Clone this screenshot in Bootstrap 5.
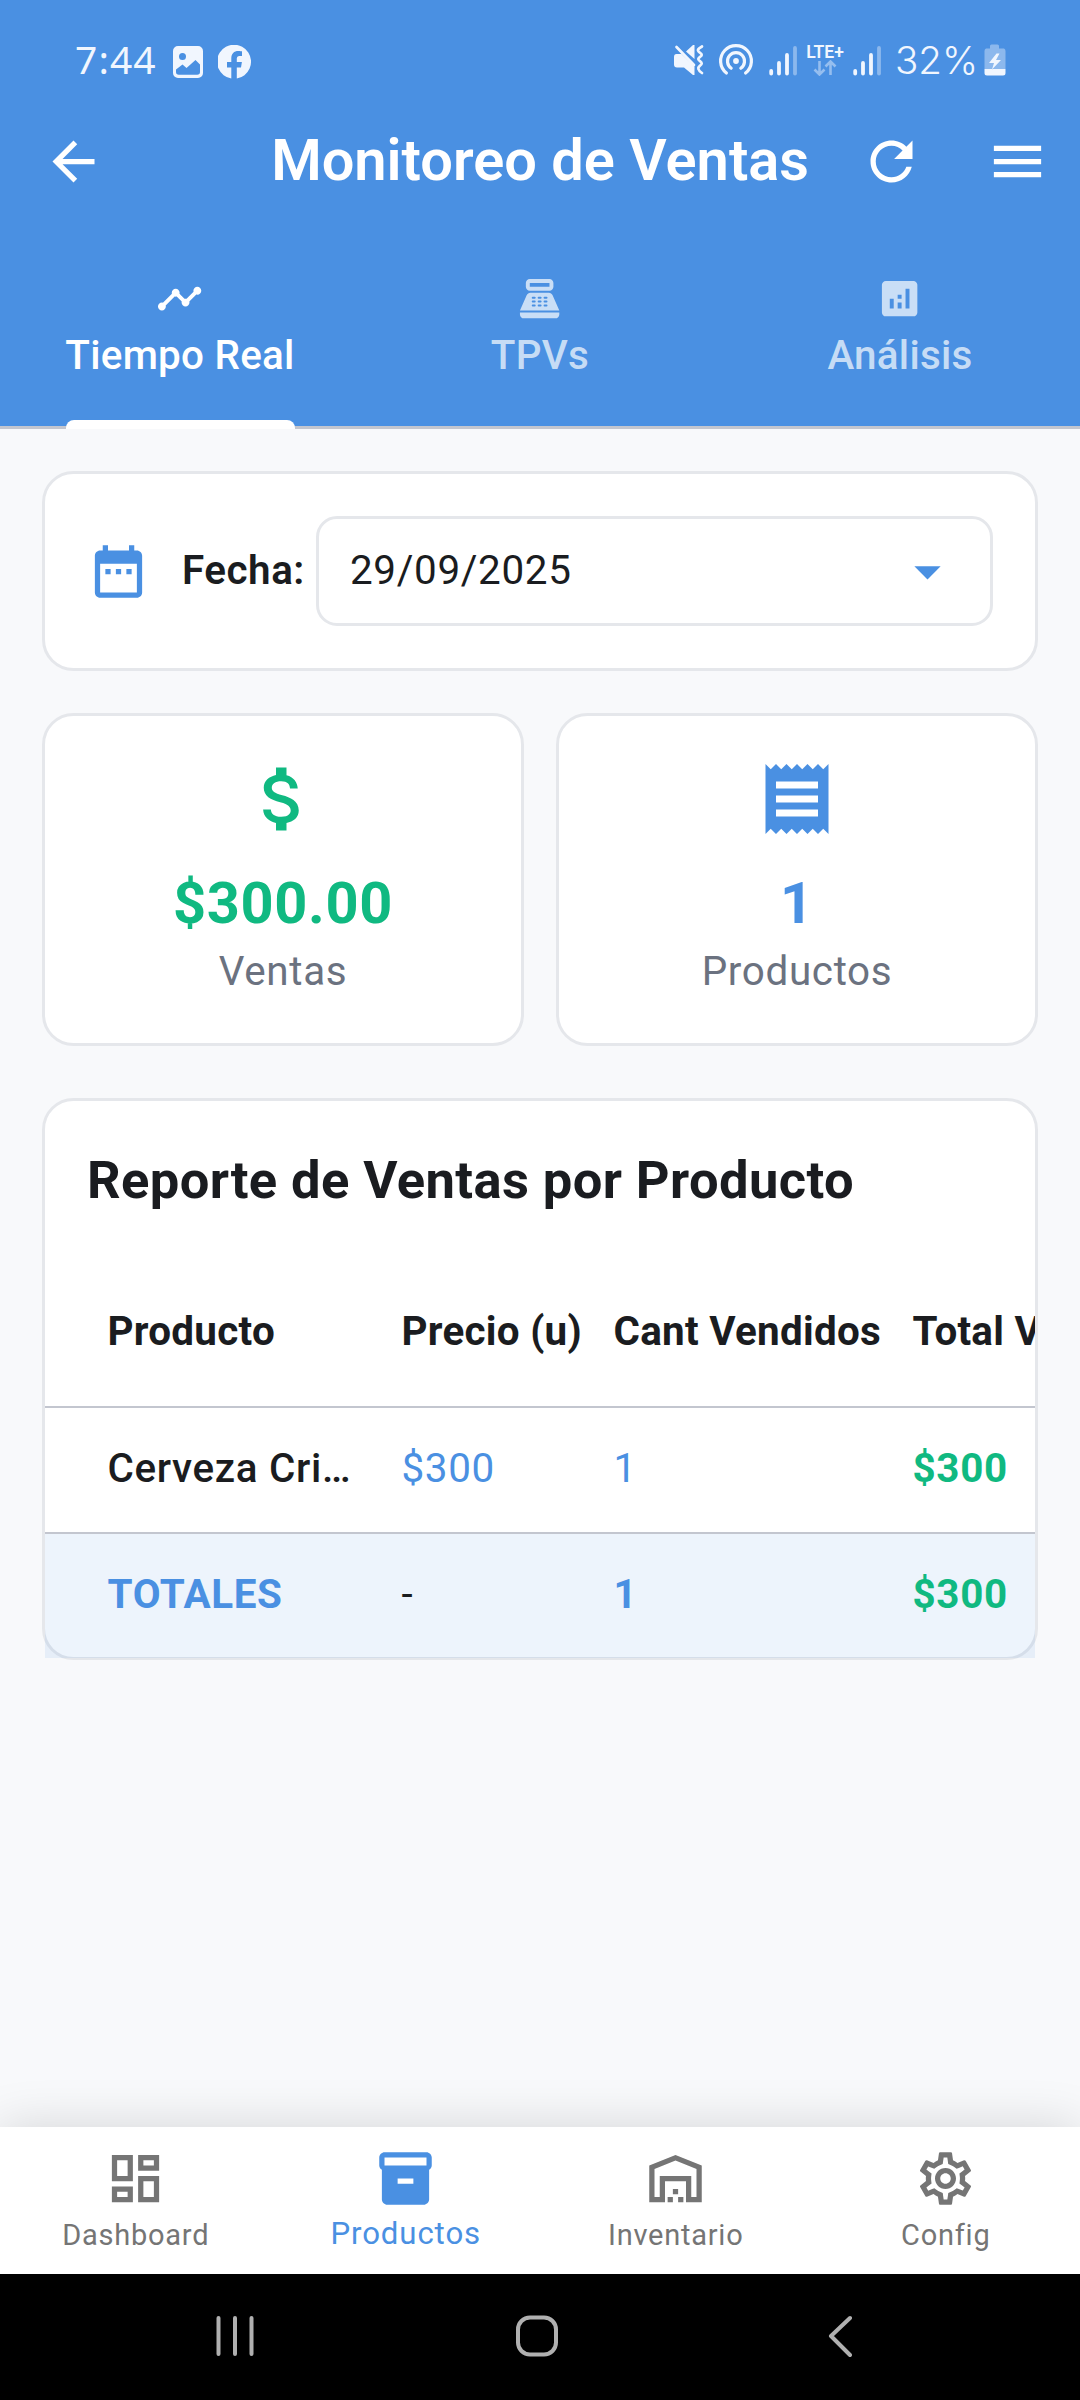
<!DOCTYPE html>
<html lang="es">
<head>
<meta charset="utf-8">
<meta name="viewport" content="width=device-width, initial-scale=1">
<title>Monitoreo de Ventas</title>
<link href="https://cdn.jsdelivr.net/npm/bootstrap@5.3.0/dist/css/bootstrap.min.css" rel="stylesheet">
<style>
:root{--azul:#4a90e2;--verde:#10b981;--borde:#e5e7eb;--tinta:#1a1c20;--gris:#6b7280;--linea:#c3c6cf}
body{width:1080px;height:2400px;overflow:hidden;background:#f8f9fb;color:var(--tinta);font-family:Roboto,"Noto Sans",sans-serif;font-size:40.4px;line-height:48px;letter-spacing:.66px}
svg{display:block;flex:none}
.ic{fill:currentColor;width:63px;height:63px}
.top-area{background:var(--azul)}
.status-row{height:120px;padding:0 74px 0 75px;color:#f1f6fe}
.clock{font-family:"Noto Sans",sans-serif;font-size:39px;letter-spacing:1.1px;width:97px;margin-top:-2px}
.pct{font-family:Inter,sans-serif;font-size:38.500px;font-weight:300;letter-spacing:0;width:89px;margin-left:14px}
.photo-ic{margin-top:3px}
.fb-ic{margin:3px auto 0 14px}
.cast-ic{margin:0 15px 0 14px}
.lte{font-size:17.5px;line-height:16px;font-weight:600;letter-spacing:0;width:38px;margin:0 9px}
.app-row{height:83px;padding:0 31px 0 42px}
.app-title{font-size:57.75px;font-weight:600;line-height:70px;letter-spacing:0;margin-top:-3px}
.reload{margin:0 63px 0 51px}
.tab-strip{height:226px;border-bottom:3px solid var(--linea)}
.tab-cell{color:rgba(255,255,255,.7);font-weight:500;letter-spacing:.26px;padding-top:72px}
.tab-cell .ic{width:47.25px;height:47.25px;margin-bottom:9.5px}
.tab-cell.on{color:#fff}
.ink-bar{width:229px;height:9px;border-radius:8px 8px 0 0;background:#fff;margin-top:auto;margin-bottom:-3px}
.page{padding:42px 42px 0}
.panel{background:#fff;border:3px solid var(--borde);border-radius:31.5px}
.date-panel{height:200px;padding:0 42px;margin-bottom:42px}
.date-name{width:134px;margin-left:32px;font-weight:600;letter-spacing:.5px}
.date-box{height:110px;border:3px solid var(--borde);border-radius:21px;padding:0 31px}
.stat-row{gap:32px}
.stat{height:333px;padding-top:41px}
.stat .ic{width:84px;height:84px}
.stat-num{font-size:57.75px;line-height:68px;font-weight:700;margin:28px 0 11px}
.stat-cap{color:var(--gris)}
.report{height:562px;margin-top:52px}
.report-title{font-size:52.5px;line-height:62px;font-weight:700;letter-spacing:.4px;padding:48px 42px 0 42px;margin:0}
.grid-wrap{overflow:hidden;margin-top:45px}
.sales{table-layout:fixed;width:1280px;border-collapse:separate;border-spacing:0}
.sales td,.sales th{padding:0;white-space:nowrap;vertical-align:middle}
.sales thead th{height:152px;font-weight:700;letter-spacing:.26px;padding-top:2px;border-bottom:2px solid var(--linea)}
.sales tbody td{height:126px;padding-bottom:2px;border-bottom:2px solid var(--linea)}
.sales tfoot td{height:124px;padding-bottom:2px;background:rgba(74,144,226,.1);font-weight:700}
.sales tr>:first-child{padding-left:62.5px}
.sales .c-1{width:356.5px}.sales .c-2{width:212px}.sales .c-3{width:299px}
.azul{color:var(--azul)}.verde{color:var(--verde)}
.semi{font-weight:500}
.bottom-nav{height:147px;background:#fff;box-shadow:0 0 50px rgba(0,0,0,.15)}
.nav-cell{color:#757575;font-size:29px;line-height:36px;letter-spacing:.75px;padding-top:20px}
.nav-cell .ic{margin-bottom:7px}
.nav-cell span{padding-left:1.500px}
.nav-cell.on{color:var(--azul);font-size:31.2px;letter-spacing:.9px}
.nav-cell.on .ic{margin-bottom:6px}
.sys-bar{height:126px;background:#000}
</style>
<script src="https://cdn.jsdelivr.net/npm/bootstrap@5.3.0/dist/js/bootstrap.bundle.min.js"></script>
</head>
<body class="d-flex flex-column">
<header class="top-area">
  <div class="status-row d-flex align-items-center">
    <span class="clock">7:44</span>
    <svg class="photo-ic" width="32" height="32" viewBox="0 0 32 32"><path fill="#f1f6fe" fill-rule="evenodd" d="M6 0h20a5 5 0 0 1 5 5v22a5 5 0 0 1-5 5H6a5 5 0 0 1-5-5V5a5 5 0 0 1 5-5zM10.500 7a3.500 3.500 0 1 0 0 7 3.500 3.500 0 0 0 0-7zM4 23.500V26c0 1.800 1 2.800 2.800 2.800h18.400c1.800 0 2.800-1 2.800-2.800v-7.500l-4.500-4.500-9 8-4-3.500z"/></svg>
    <svg class="fb-ic" width="34" height="34" viewBox="0 0 34 34"><path fill="#f1f6fe" d="M13.300 33.500V22.500H9V17h4.300v-3.600c0-4.900 2.700-7.500 7-7.500 1.700 0 3.700.3 3.700.3v4.700h-2.400c-2 0-2.800 1.300-2.800 2.700V17h5.100l-.9 5.500h-4.200v11A17 17 0 1 0 13.300 33.500z"/></svg>
    <svg width="32" height="32" viewBox="0 0 32 32" fill="none" stroke="#f1f6fe" stroke-width="2.700" stroke-linecap="round" stroke-linejoin="round"><path fill="#f1f6fe" stroke="none" d="M4.500 10h5L22.500 22.500V31h-1.500L12 23.500H5c-2 0-3-1-3-3V13c0-2 .8-3 2.500-3zM14 7.500l7-6.500h1.500v14z"/><path d="M4.500 3l17.500 18"/><path d="M30 2.500c-5 3-5 4-2 6.300 2.300 1.700 2.300 2.500 0 4-2.300 1.700-2.300 2.700 0 4.400 2.300 1.700 2.300 2.700 0 4.400-2.700 2.200-2.300 4.500 2 7.400"/></svg>
    <svg class="cast-ic" width="36" height="34" viewBox="-18 -18 36 34" fill="none" stroke="#f1f6fe" stroke-width="3.200" stroke-linecap="round"><circle r="2.900" fill="#f1f6fe" stroke="none"/><path d="M-4.800 7.200A8.500 8.500 0 1 1 4.800 7.200M-9.600 12A15.400 15.400 0 1 1 9.600 12"/></svg>
    <svg width="28" height="31" viewBox="0 0 28 31" fill="none" stroke="#f1f6fe" stroke-width="3.800" stroke-linecap="round"><path d="M2.200 26v2.500M10 18v10.500M18 10v18.500"/><path d="M26 3v25.500" stroke-opacity=".4"/></svg>
    <div class="lte d-flex flex-column align-items-center"><span>LTE+</span><svg width="24" height="16" viewBox="0 0 24 16" fill="none" stroke="#f1f6fe" stroke-opacity=".45" stroke-width="2.600"><path d="M6.500 1v13M1.500 9.500l5 5 5-5M17.500 15V2M12.500 6.500l5-5 5 5"/></svg></div>
    <svg width="28" height="31" viewBox="0 0 28 31" fill="none" stroke="#f1f6fe" stroke-width="3.800" stroke-linecap="round"><path d="M2.200 26v2.500M10 18v10.500M18 10v18.500"/><path d="M26 3v25.500" stroke-opacity=".4"/></svg>
    <span class="pct">32%</span>
    <svg width="22" height="32" viewBox="0 0 22 32"><path fill="#f1f6fe" fill-opacity=".4" d="M6 4.500V2Q6 .5 7.500 .5h6Q15 .5 15 2v2.500h5Q21.500 5 21.500 7v18H.500V7Q.500 5 2 4.500z"/><path fill="#f1f6fe" d="M.500 25h21v4q0 2.500-2.500 2.500H3Q.500 31.500.500 29zM12.500 9.500l-7.500 9.500h5l-2 6.500 9-9.500h-5l3.500-6.500z"/></svg>
  </div>
  <div class="app-row d-flex align-items-center">
    <svg class="ic text-white" viewBox="0 0 24 24"><path d="M20 11H7.830l5.590-5.590L12 4l-8 8 8 8 1.410-1.410L7.830 13H20v-2z"/></svg>
    <span class="app-title text-white ms-auto">Monitoreo de Ventas</span>
    <svg class="ic reload text-white" viewBox="0 0 24 24"><path d="M17.650 6.350C16.200 4.900 14.210 4 12 4c-4.420 0-7.990 3.580-7.990 8s3.570 8 7.990 8c3.730 0 6.840-2.550 7.730-6h-2.080c-.82 2.330-3.040 4-5.650 4-3.310 0-6-2.690-6-6s2.690-6 6-6c1.660 0 3.140.69 4.220 1.780L13 11h7V4l-2.350 2.350z"/></svg>
    <svg class="ic text-white" viewBox="0 0 24 24"><path d="M3 18h18v-2H3v2zm0-5h18v-2H3v2zm0-7v2h18V6H3z"/></svg>
  </div>
  <nav class="tab-strip d-flex">
    <div class="tab-cell on col-4 d-flex flex-column align-items-center">
      <svg class="ic" viewBox="0 0 24 24"><path d="M23 8c0 1.100-.9 2-2 2-.18 0-.35-.02-.51-.07l-3.560 3.550c.05.16.07.34.07.52 0 1.100-.9 2-2 2s-2-.9-2-2c0-.18.02-.36.07-.52l-2.550-2.550c-.16.05-.34.07-.52.07s-.36-.02-.52-.07l-4.550 4.560c.05.16.07.33.07.51 0 1.100-.9 2-2 2s-2-.9-2-2 .9-2 2-2c.18 0 .35.02.51.07l4.560-4.550C8.020 9.360 8 9.180 8 9c0-1.100.9-2 2-2s2 .9 2 2c0 .18-.02.36-.07.52l2.550 2.550c.16-.05.34-.07.52-.07s.36.02.52.07l3.550-3.560C19.020 8.350 19 8.180 19 8c0-1.100.9-2 2-2s2 .9 2 2z"/></svg>
      <span>Tiempo Real</span>
      <div class="ink-bar"></div>
    </div>
    <div class="tab-cell col-4 d-flex flex-column align-items-center">
      <svg class="ic" viewBox="0 0 24 24"><path fill-rule="evenodd" d="M17 2H7c-1.100 0-2 .9-2 2v2c0 1.100.9 2 2 2h10c1.100 0 2-.9 2-2V4c0-1.100-.9-2-2-2zm0 4H7V4h10v2zm3 16H4c-1.100 0-2-.9-2-2v-1h20v1c0 1.100-.9 2-2 2zm-1.470-11.810C18.210 9.470 17.490 9 16.700 9H7.300c-.79 0-1.510.47-1.830 1.190L2 18h20l-3.470-7.810zM8.500 11h1a.5.5 0 0 1 0 1h-1a.5.5 0 0 1 0-1zm3 0h1a.5.5 0 0 1 0 1h-1a.5.5 0 0 1 0-1zm3 0h1a.5.5 0 0 1 0 1h-1a.5.5 0 0 1 0-1zm-6 2h1a.5.5 0 0 1 0 1h-1a.5.5 0 0 1 0-1zm3 0h1a.5.5 0 0 1 0 1h-1a.5.5 0 0 1 0-1zm3 0h1a.5.5 0 0 1 0 1h-1a.5.5 0 0 1 0-1zm-6 2h1a.5.5 0 0 1 0 1h-1a.5.5 0 0 1 0-1zm3 0h1a.5.5 0 0 1 0 1h-1a.5.5 0 0 1 0-1zm3 0h1a.5.5 0 0 1 0 1h-1a.5.5 0 0 1 0-1z"/></svg>
      <span>TPVs</span>
    </div>
    <div class="tab-cell col-4 d-flex flex-column align-items-center">
      <svg class="ic" viewBox="0 0 24 24"><path d="M19 3H5c-1.100 0-2 .9-2 2v14c0 1.100.9 2 2 2h14c1.100 0 2-.9 2-2V5c0-1.100-.9-2-2-2zM9 17H7v-5h2v5zm4 0h-2v-3h2v3zm0-5h-2v-2h2v2zm4 5h-2V7h2v10z"/></svg>
      <span>Análisis</span>
    </div>
  </nav>
</header>

<main class="page flex-grow-1">
  <section class="panel date-panel d-flex align-items-center">
    <svg class="ic azul" viewBox="0 0 24 24"><path fill-rule="evenodd" d="M6 2h2v2h8V2h2v2h1c1.100 0 2 .9 2 2v14c0 1.100-.9 2-2 2H5c-1.100 0-2-.9-2-2V6c0-1.100.9-2 2-2h1zM5 9v11h14V9zM7 11h2v2H7zm4 0h2v2h-2zm4 0h2v2h-2z"/></svg>
    <span class="date-name">Fecha:</span>
    <div class="date-box flex-grow-1 d-flex align-items-center justify-content-between">
      <span>29/09/2025</span>
      <svg class="ic azul" viewBox="0 0 24 24"><path d="M7 10l5 5 5-5z"/></svg>
    </div>
  </section>

  <section class="stat-row d-flex">
    <div class="panel stat flex-fill w-50 d-flex flex-column align-items-center">
      <svg class="ic verde" viewBox="0 0 24 24"><path d="M11.800 10.900c-2.270-.59-3-1.200-3-2.150 0-1.090 1.010-1.850 2.700-1.850 1.780 0 2.440.85 2.500 2.100h2.210c-.07-1.720-1.120-3.300-3.210-3.810V3h-3v2.160c-1.940.42-3.500 1.680-3.500 3.610 0 2.310 1.910 3.460 4.700 4.130 2.500.6 3 1.480 3 2.410 0 .69-.49 1.790-2.700 1.790-2.060 0-2.870-.92-2.980-2.100h-2.200c.12 2.190 1.760 3.420 3.680 3.830V21h3v-2.150c1.950-.37 3.500-1.500 3.500-3.550 0-2.840-2.430-3.810-4.700-4.400z"/></svg>
      <div class="stat-num verde">$300.00</div>
      <div class="stat-cap">Ventas</div>
    </div>
    <div class="panel stat flex-fill w-50 d-flex flex-column align-items-center">
      <svg class="ic azul" viewBox="0 0 24 24"><path d="M18 17H6v-2h12v2zm0-4H6v-2h12v2zm0-4H6V7h12v2zM3 22l1.500-1.500L6 22l1.500-1.500L9 22l1.500-1.500L12 22l1.500-1.500L15 22l1.500-1.500L18 22l1.500-1.500L21 22V2l-1.500 1.500L18 2l-1.500 1.500L15 2l-1.500 1.500L12 2l-1.500 1.500L9 2 7.500 3.500 6 2 4.500 3.500 3 2v20z"/></svg>
      <div class="stat-num azul">1</div>
      <div class="stat-cap">Productos</div>
    </div>
  </section>

  <section class="panel report">
    <h2 class="report-title">Reporte de Ventas por Producto</h2>
    <div class="grid-wrap">
      <table class="sales">
        <thead><tr><th class="c-1">Producto</th><th class="c-2">Precio (u)</th><th class="c-3">Cant Vendidos</th><th>Total V</th></tr></thead>
        <tbody><tr><td class="semi">Cerveza Cri…</td><td class="azul">$300</td><td class="azul">1</td><td class="verde fw-bold">$300</td></tr></tbody>
        <tfoot><tr><td class="azul">TOTALES</td><td class="fw-normal">-</td><td class="azul">1</td><td class="verde">$300</td></tr></tfoot>
      </table>
    </div>
  </section>
</main>

<nav class="bottom-nav d-flex position-relative">
  <div class="nav-cell col-3 d-flex flex-column align-items-center">
    <svg class="ic" viewBox="0 0 24 24"><path d="M19 5v2h-4V5h4M9 5v6H5V5h4m10 8v6h-4v-6h4M9 17v2H5v-2h4M21 3h-8v6h8V3zM11 3H3v10h8V3zm10 8h-8v10h8V11zm-10 4H3v6h8v-6z"/></svg>
    <span>Dashboard</span>
  </div>
  <div class="nav-cell on col-3 d-flex flex-column align-items-center">
    <svg class="ic" viewBox="0 0 24 24"><path d="M20 2H4c-1 0-2 .9-2 2v3.010c0 .72.43 1.340 1 1.690V20c0 1.100 1.100 2 2 2h14c.9 0 2-.9 2-2V8.700c.57-.35 1-.97 1-1.690V4c0-1.100-1-2-2-2zm-5 12H9v-2h6v2zm5-7H4V4l16-.02V7z"/></svg>
    <span>Productos</span>
  </div>
  <div class="nav-cell col-3 d-flex flex-column align-items-center">
    <svg class="ic" viewBox="0 0 24 24"><path d="M20 8.350V19h-2v-8H6v8H4V8.350l8-3.200 8 3.200zM22 21V7L12 3 2 7v14h6v-8h8v8h6zM11 19H9v2h2v-2zM13 16h-2v2h2v-2zM15 19h-2v2h2v-2z"/></svg>
    <span>Inventario</span>
  </div>
  <div class="nav-cell col-3 d-flex flex-column align-items-center">
    <svg class="ic" viewBox="0 0 24 24"><path d="M19.430 12.980c.04-.32.07-.64.07-.98 0-.34-.03-.66-.07-.98l2.110-1.650c.19-.15.24-.42.12-.64l-2-3.460c-.09-.16-.26-.25-.44-.25-.06 0-.12.01-.17.03l-2.490 1c-.52-.4-1.080-.73-1.690-.98l-.38-2.650C14.460 2.180 14.250 2 14 2h-4c-.25 0-.46.18-.49.42l-.38 2.650c-.61.25-1.170.59-1.690.98l-2.490-1c-.06-.02-.12-.03-.18-.03-.17 0-.34.09-.43.25l-2 3.460c-.13.22-.07.49.12.64l2.110 1.650c-.04.32-.07.65-.07.98 0 .33.03.66.07.98l-2.110 1.650c-.19.15-.24.42-.12.64l2 3.460c.09.16.26.25.44.25.06 0 .12-.01.17-.03l2.490-1c.52.4 1.080.73 1.690.98l.38 2.650c.03.24.24.42.49.42h4c.25 0 .46-.18.49-.42l.38-2.650c.61-.25 1.170-.59 1.690-.98l2.490 1c.06.02.12.03.18.03.17 0 .34-.09.43-.25l2-3.460c.12-.22.07-.49-.12-.64l-2.110-1.650zm-1.980-1.710c.04.31.05.52.05.73 0 .21-.02.43-.05.73l-.14 1.130.89.7 1.080.84-.7 1.210-1.270-.51-1.040-.42-.9.68c-.43.32-.84.56-1.250.73l-1.060.43-.16 1.130-.2 1.350h-1.400l-.19-1.350-.16-1.130-1.060-.43c-.43-.18-.83-.41-1.230-.71l-.91-.7-1.060.43-1.270.51-.7-1.210 1.080-.84.89-.7-.14-1.130c-.03-.31-.05-.54-.05-.74s.02-.43.05-.73l.14-1.130-.89-.7-1.080-.84.7-1.210 1.270.51 1.040.42.9-.68c.43-.32.84-.56 1.250-.73l1.060-.43.16-1.130.2-1.350h1.390l.19 1.350.16 1.130 1.060.43c.43.18.83.41 1.230.71l.91.7 1.060-.43 1.270-.51.7 1.210-1.070.85-.89.7.14 1.130zM12 8c-2.210 0-4 1.790-4 4s1.790 4 4 4 4-1.790 4-4-1.790-4-4-4zm0 6c-1.100 0-2-.9-2-2s.9-2 2-2 2 .9 2 2-.9 2-2 2z"/></svg>
    <span>Config</span>
  </div>
</nav>
<footer class="sys-bar position-relative">
  <svg width="1080" height="126" viewBox="0 0 1080 126" fill="none" stroke="#b0b0b0" stroke-width="4" stroke-linecap="round" stroke-linejoin="round"><path d="M218.500 44v36M235 44v36M251.500 44v36M850 44l-19 18 19 19"/><rect x="518" y="43.500" width="38" height="37" rx="12"/></svg>
</footer>
</body>
</html>
